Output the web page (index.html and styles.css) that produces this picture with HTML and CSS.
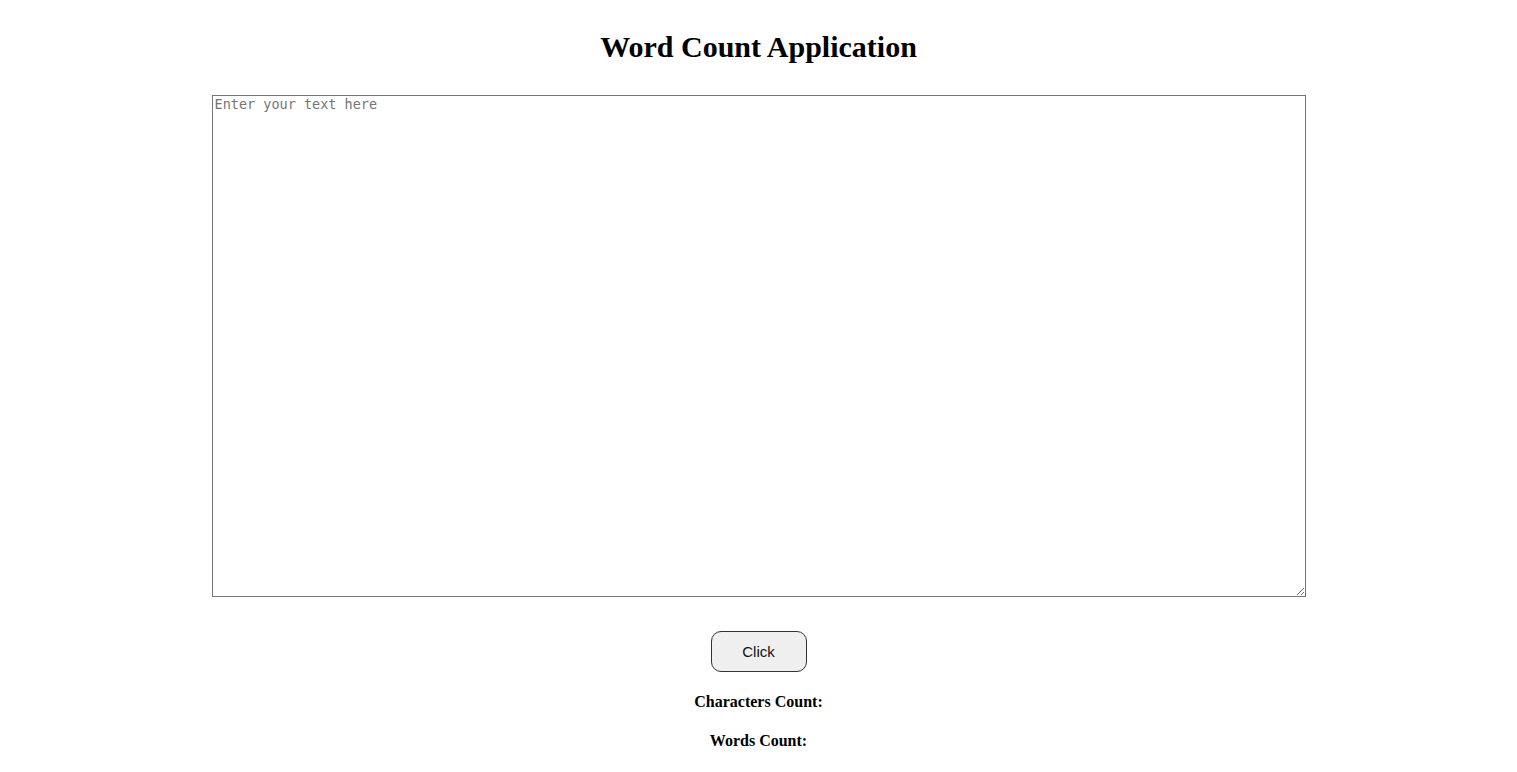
FILE: index.html
```html
<!DOCTYPE html>
<html lang="en">
<head>
<meta charset="utf-8">
<title>Word Count Application</title>
<link rel="stylesheet" href="styles.css">
</head>
<body>
<main class="app">
  <h1 class="title">Word Count Application</h1>
  <textarea class="input" placeholder="Enter your text here"></textarea>
  <button class="btn" type="button">Click</button>
  <h4 class="stat">Characters Count:</h4>
  <h4 class="stat">Words Count:</h4>
</main>
</body>
</html>
```
FILE: styles.css
```css
html, body {
  margin: 0;
  padding: 0;
  background: #ffffff;
}
body {
  font-family: "Liberation Serif", "Times New Roman", serif;
  color: #000;
}
.app {
  display: flex;
  flex-direction: column;
  align-items: center;
  padding-top: 30px;
}
.title {
  font-size: 30px;
  font-weight: bold;
  margin: 0 0 30px 0;
  line-height: 34.5px;
}
.input {
  box-sizing: border-box;
  width: 1094px;
  height: 502px;
  border: 1px solid #767676;
  padding: 0 2px 2px 2px;
  font-family: "DejaVu Sans Mono", "Liberation Mono", monospace;
  font-size: 13.5px;
  color: #000;
  margin: 0;
}
.input::placeholder {
  color: #757575;
}
.btn {
  box-sizing: border-box;
  margin-top: 34px;
  width: 96px;
  height: 41px;
  border: 1px solid #333;
  border-radius: 10px;
  background: #efefef;
  font-family: "Liberation Sans", Arial, sans-serif;
  font-size: 15px;
  color: #111;
  padding: 0;
}
.stat {
  font-size: 16px;
  font-weight: bold;
  margin: 20px 0 0 0;
  line-height: 19px;
}
```
